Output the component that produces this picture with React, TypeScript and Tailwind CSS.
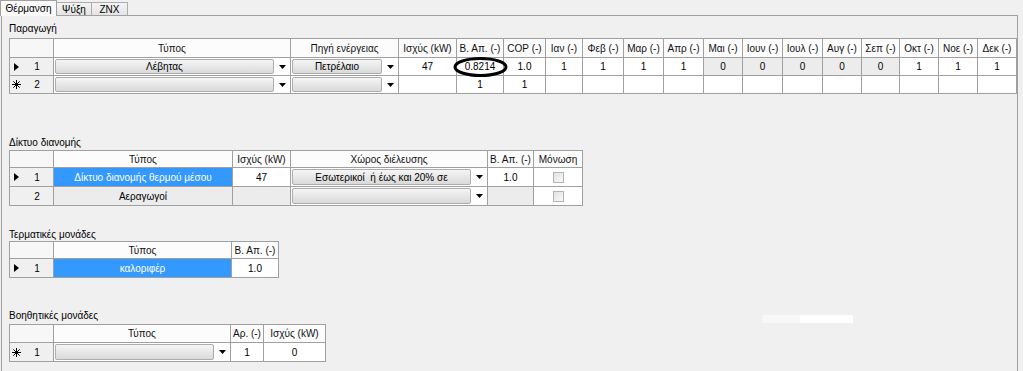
import React from "react";

type Cell =
  | string
  | { t: "ro"; v: string }
  | { t: "sel"; v: string }
  | { t: "combo"; v: string }
  | { t: "check" };

type Row = { mark: "arrow" | "star" | "none"; n: string; cells: Cell[] };

function Marker({ mark }: { mark: Row["mark"] }) {
  if (mark === "arrow")
    return (
      <svg width="5" height="8" viewBox="0 0 5 8">
        <path d="M0 0L5 4L0 8Z" fill="#000" />
      </svg>
    );
  if (mark === "star")
    return (
      <svg width="9" height="9" viewBox="0 0 9 9" stroke="#000" strokeWidth="1">
        <path d="M4.5 0V9M0 4.5H9M1.3 1.3L7.7 7.7M7.7 1.3L1.3 7.7" />
      </svg>
    );
  return null;
}

function Combo({ v }: { v: string }) {
  return (
    <div className="flex h-full items-stretch gap-[1px] bg-white p-[1px]">
      <div className="flex flex-1 items-center justify-center whitespace-pre rounded-[2px] border border-[#adadad] bg-linear-to-b from-[#f5f5f5] to-[#dadada] text-black">
        {v}
      </div>
      <div className="flex w-[14px] items-center justify-center">
        <svg width="7" height="4" viewBox="0 0 7 4">
          <path d="M0 0H7L3.5 4Z" fill="#000" />
        </svg>
      </div>
    </div>
  );
}

function DataCell({ c, h }: { c: Cell; h: string }) {
  const base = `${h} border-r border-b border-[#a0a0a0]`;
  if (typeof c === "string")
    return <div className={`${base} flex items-center justify-center bg-white`}>{c}</div>;
  if (c.t === "ro")
    return <div className={`${base} flex items-center justify-center bg-[#ececec]`}>{c.v}</div>;
  if (c.t === "sel")
    return <div className={`${base} flex items-center justify-center bg-[#3399ff] text-white`}>{c.v}</div>;
  if (c.t === "combo")
    return (
      <div className={base}>
        <Combo v={c.v} />
      </div>
    );
  return (
    <div className={`${base} flex items-center justify-center bg-white`}>
      <div className="h-[11px] w-[11px] border border-[#b4b4b4] bg-linear-to-br from-[#e2e2e2] to-[#f8f8f8]" />
    </div>
  );
}

function Grid({
  cols,
  headH,
  rowH,
  headers,
  rows,
}: {
  cols: string;
  headH: string;
  rowH: string;
  headers: string[];
  rows: Row[];
}) {
  return (
    <div className={`grid w-fit border-l border-t border-[#a0a0a0] ${cols}`}>
      <div className={`${headH} border-r border-b border-[#a0a0a0] bg-[#f7f7f7]`} />
      {headers.map((hd, i) => (
        <div
          key={i}
          className={`${headH} flex items-center justify-center border-r border-b border-[#a0a0a0] bg-[#fcfcfc] text-[#111]`}
        >
          {hd}
        </div>
      ))}
      {rows.map((r, ri) => (
        <React.Fragment key={ri}>
          <div className={`${rowH} flex items-center border-r border-b border-[#a0a0a0] bg-[#f0f0f0] pl-[2px]`}>
            <div className="flex w-[9px] items-center justify-center">
              <Marker mark={r.mark} />
            </div>
            <div className="flex-1 text-center">{r.n}</div>
          </div>
          {r.cells.map((c, ci) => (
            <DataCell key={ci} c={c} h={rowH} />
          ))}
        </React.Fragment>
      ))}
    </div>
  );
}

const months = ["Ιαν", "Φεβ", "Μαρ", "Απρ", "Μαι", "Ιουν", "Ιουλ", "Αυγ", "Σεπ", "Οκτ", "Νοε", "Δεκ"];

const production: Row[] = [
  {
    mark: "arrow",
    n: "1",
    cells: [
      { t: "combo", v: "Λέβητας" },
      { t: "combo", v: "Πετρέλαιο" },
      "47",
      "0.8214",
      "1.0",
      "1",
      "1",
      "1",
      "1",
      { t: "ro", v: "0" },
      { t: "ro", v: "0" },
      { t: "ro", v: "0" },
      { t: "ro", v: "0" },
      { t: "ro", v: "0" },
      "1",
      "1",
      "1",
    ],
  },
  {
    mark: "star",
    n: "2",
    cells: [{ t: "combo", v: "" }, { t: "combo", v: "" }, "", "1", "1", ...months.map(() => "")],
  },
];

const network: Row[] = [
  {
    mark: "arrow",
    n: "1",
    cells: [
      { t: "sel", v: "Δίκτυο διανομής θερμού μέσου" },
      "47",
      { t: "combo", v: "Εσωτερικοί  ή έως και 20% σε" },
      "1.0",
      { t: "check" },
    ],
  },
  {
    mark: "none",
    n: "2",
    cells: [{ t: "ro", v: "Αεραγωγοί" }, { t: "ro", v: "" }, { t: "combo", v: "" }, { t: "ro", v: "" }, { t: "check" }],
  },
];

const terminal: Row[] = [{ mark: "arrow", n: "1", cells: [{ t: "sel", v: "καλοριφέρ" }, "1.0"] }];

const auxiliary: Row[] = [{ mark: "star", n: "1", cells: [{ t: "combo", v: "" }, "1", "0"] }];

export default function App() {
  return (
    <div className="relative flex h-[371px] w-[1023px] flex-col overflow-hidden bg-[#f0f0f0] font-['Liberation_Sans',Arial,sans-serif] text-[10px] text-black">
      {/* tab strip */}
      <div className="flex h-[15px] items-end">
        <div className="relative z-10 -mb-[1px] flex h-[16px] w-[57px] items-center justify-center border border-b-0 border-[#a0a0a0] bg-[#fafafa]">
          Θέρμανση
        </div>
        <div className="flex h-[13px] w-[35px] items-center justify-center border border-b-0 border-l-0 border-[#acacac] bg-linear-to-b from-[#f4f4f4] to-[#e4e4e4]">
          Ψύξη
        </div>
        <div className="flex h-[13px] w-[36px] items-center justify-center border border-b-0 border-l-0 border-[#acacac] bg-linear-to-b from-[#f4f4f4] to-[#e4e4e4]">
          ZNX
        </div>
      </div>

      {/* tab page */}
      <div className="ml-[1px] flex w-[1017px] flex-1 flex-col border border-b-0 border-[#a0a0a0] bg-[#f0f0f0] pl-[7px] pt-[6px]">
        <div className="h-[14px] leading-[14px]">Παραγωγή</div>
        <div className="mt-[2px]">
          <Grid
            cols="grid-cols-[44px_237px_108px_58px_47px_42px_37px_41px_40px_40px_39px_40px_40px_39px_38px_39px_39px_39px]"
            headH="h-[19px]"
            rowH="h-[18px]"
            headers={["Τύπος", "Πηγή ενέργειας", "Ισχύς (kW)", "Β. Απ. (-)", "COP (-)", ...months.map((m) => `${m} (-)`)]}
            rows={production}
          />
        </div>

        <div className="mt-[42px] h-[14px] leading-[14px]">Δίκτυο διανομής</div>
        <Grid
          cols="grid-cols-[44px_179px_58px_197px_46px_49px]"
          headH="h-[17px]"
          rowH="h-[19px]"
          headers={["Τύπος", "Ισχύς (kW)", "Χώρος διέλευσης", "Β. Απ. (-)", "Μόνωση"]}
          rows={network}
        />

        <div className="mt-[22px] h-[13px] leading-[14px]">Τερματικές μονάδες</div>
        <Grid
          cols="grid-cols-[44px_178px_47px]"
          headH="h-[17px]"
          rowH="h-[19px]"
          headers={["Τύπος", "Β. Απ. (-)"]}
          rows={terminal}
        />

        <div className="mt-[31px] h-[14px] leading-[14px]">Βοηθητικές μονάδες</div>
        <div className="mt-[1px]">
          <Grid
            cols="grid-cols-[44px_177px_33px_62px]"
            headH="h-[18px]"
            rowH="h-[19px]"
            headers={["Τύπος", "Αρ. (-)", "Ισχύς (kW)"]}
            rows={auxiliary}
          />
        </div>
      </div>

      {/* hand-drawn annotation around the efficiency value */}
      <svg className="absolute left-[450px] top-[54px]" width="62" height="26" viewBox="0 0 62 26">
        <ellipse cx="30.5" cy="13" rx="25.5" ry="8.5" fill="none" stroke="#000" strokeWidth="3" />
      </svg>

      {/* stray white strip */}
      <div className="absolute left-[763px] top-[315px] flex h-[8px] w-[90px]">
        <div className="w-[37px] bg-[#f8f8f8]" />
        <div className="flex-1 bg-white" />
      </div>
    </div>
  );
}
